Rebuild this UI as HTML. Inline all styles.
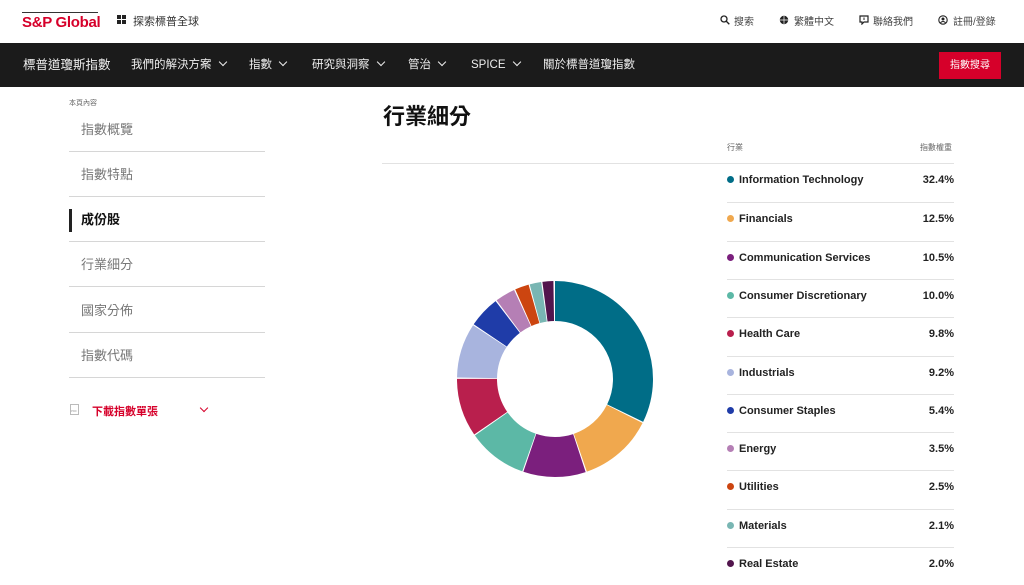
<!DOCTYPE html>
<html><head><meta charset="utf-8"><style>
*{margin:0;padding:0;box-sizing:border-box}
body{width:1024px;height:575px;overflow:hidden;background:#fff;font-family:"Liberation Sans","Noto Sans CJK TC",sans-serif;color:#222;position:relative}
.abs{position:absolute}
.top a{position:absolute;top:13px;font-size:10px;color:#444;white-space:nowrap}
.nav{position:absolute;top:43px;left:0;width:1024px;height:44px;background:#1b1b1b}
.nav span{position:absolute;top:0;height:44px;line-height:44px;color:#eee;font-size:11.5px;white-space:nowrap}
.chev{display:inline-block;width:6px;height:6px;border-right:1.6px solid #eee;border-bottom:1.6px solid #eee;transform:rotate(45deg);margin-left:8px;position:relative;top:-3px}
.side{position:absolute;left:69px;width:196px;height:45px;border-bottom:1px solid #d6d6d6;font-size:13px;color:#777;padding-left:12px;line-height:45px}
.row{position:absolute;left:727px;width:227px;height:38.3px;border-top:1px solid #e2e2e2;font-size:11px;font-weight:bold;color:#222}
.row .d{position:absolute;left:0;top:12px;width:7px;height:7px;border-radius:50%}
.row .n{position:absolute;left:12px;top:10px}
.row .v{position:absolute;right:0;top:10px}
</style></head><body>
<div class="abs" style="left:22px;top:12px;width:76px;border-top:1.5px solid #333"></div>
<div class="abs" style="left:22px;top:14px;font-size:15px;font-weight:bold;color:#d6002a;letter-spacing:-0.3px">S&amp;P Global</div>
<div class="abs" style="left:117px;top:15px;width:9px;height:9px">
<div class="abs" style="left:0;top:0;width:4px;height:4px;background:#222"></div><div class="abs" style="left:5px;top:0;width:4px;height:4px;background:#222"></div><div class="abs" style="left:0;top:5px;width:4px;height:4px;background:#222"></div><div class="abs" style="left:5px;top:5px;width:4px;height:4px;background:#222"></div></div>
<div class="abs" style="left:133px;top:13px;font-size:11px;color:#333">探索標普全球</div>
<div class="top">
<svg class="abs" style="left:720px;top:15px" width="10" height="10" viewBox="0 0 10 10"><circle cx="4" cy="4" r="3" fill="none" stroke="#222" stroke-width="1.3"/><line x1="6.3" y1="6.3" x2="9.3" y2="9.3" stroke="#222" stroke-width="1.4"/></svg>
<a style="left:734px">搜索</a>
<svg class="abs" style="left:779px;top:15px" width="10" height="10" viewBox="0 0 10 10"><circle cx="5" cy="5" r="4.2" fill="#222"/><path d="M1 5h8M5 1v8" stroke="#fff" stroke-width=".7"/></svg>
<a style="left:794px">繁體中文</a>
<svg class="abs" style="left:859px;top:15px" width="10" height="10" viewBox="0 0 10 10"><path d="M1 1h8v6H5L3 9V7H1z" fill="none" stroke="#222" stroke-width="1.2"/><path d="M5 2.5v2.5" stroke="#222" stroke-width="1"/></svg>
<a style="left:873px">聯絡我們</a>
<svg class="abs" style="left:938px;top:15px" width="10" height="10" viewBox="0 0 10 10"><circle cx="5" cy="5" r="4.2" fill="none" stroke="#222" stroke-width="1.1"/><circle cx="5" cy="4" r="1.5" fill="#222"/><path d="M2.5 8c1-2 4-2 5 0" stroke="#222" fill="none"/></svg>
<a style="left:953px">註冊/登錄</a>
</div>
<div class="nav">
<span style="left:23px;font-size:12.5px">標普道瓊斯指數</span>
<span style="left:131px">我們的解決方案<i class="chev"></i></span>
<span style="left:249px">指數<i class="chev"></i></span>
<span style="left:312px">研究與洞察<i class="chev"></i></span>
<span style="left:408px">管治<i class="chev"></i></span>
<span style="left:471px">SPICE<i class="chev"></i></span>
<span style="left:543px">關於標普道瓊指數</span>
<div class="abs" style="left:939px;top:9px;width:62px;height:27px;background:#d6002a;color:#fff;font-size:10px;text-align:center;line-height:27px">指數搜尋</div>
</div>
<div class="abs" style="left:69px;top:98px;font-size:7px;color:#666">本頁內容</div>
<div class="side" style="top:107px">指數概覽</div>
<div class="side" style="top:152px">指數特點</div>
<div class="side" style="top:197px;color:#111;font-weight:bold">成份股</div>
<div class="abs" style="left:69px;top:209px;width:3px;height:23px;background:#222"></div>
<div class="side" style="top:242px">行業細分</div>
<div class="side" style="top:288px">國家分佈</div>
<div class="side" style="top:333px">指數代碼</div>
<div class="abs" style="left:70px;top:404px;width:9px;height:11px;border:1px solid #bbb;font-size:3px;color:#999;padding-top:4px">PDF</div>
<div class="abs" style="left:92px;top:403px;font-size:11px;font-weight:bold;color:#d6002a">下載指數單張</div>
<div class="abs" style="left:201px;top:405px;width:6px;height:6px;border-right:1.5px solid #d6002a;border-bottom:1.5px solid #d6002a;transform:rotate(45deg)"></div>
<div class="abs" style="left:383px;top:99px;font-size:22px;font-weight:bold;color:#111">行業細分</div>
<div class="abs" style="left:382px;top:163px;width:572px;border-top:1px solid #e2e2e2"></div>
<div class="abs" style="left:727px;top:142px;font-size:8px;color:#666">行業</div>
<div class="abs" style="left:920px;top:142px;font-size:8px;color:#666">指數權重</div>
<svg class="abs" style="left:455px;top:279px" width="200" height="200" viewBox="0 0 200 200">
<g transform="rotate(-90 100 100)" fill="none" stroke-width="40">
<circle cx="100" cy="100" r="78" stroke="#006d87" stroke-dasharray="157.8 500" stroke-dashoffset="0"/>
<circle cx="100" cy="100" r="78" stroke="#f0a84e" stroke-dasharray="60.3 500" stroke-dashoffset="-158.8"/>
<circle cx="100" cy="100" r="78" stroke="#7b1f7d" stroke-dasharray="50.5 500" stroke-dashoffset="-220.1"/>
<circle cx="100" cy="100" r="78" stroke="#5cb8a6" stroke-dasharray="48 500" stroke-dashoffset="-271.5"/>
<circle cx="100" cy="100" r="78" stroke="#b91f4d" stroke-dasharray="47 500" stroke-dashoffset="-320.5"/>
<circle cx="100" cy="100" r="78" stroke="#a8b4de" stroke-dasharray="44.1 500" stroke-dashoffset="-368.6"/>
<circle cx="100" cy="100" r="78" stroke="#1f3ca8" stroke-dasharray="25.5 500" stroke-dashoffset="-413.6"/>
<circle cx="100" cy="100" r="78" stroke="#b57fb5" stroke-dasharray="16.2 500" stroke-dashoffset="-440.1"/>
<circle cx="100" cy="100" r="78" stroke="#cc4510" stroke-dasharray="11.3 500" stroke-dashoffset="-457.3"/>
<circle cx="100" cy="100" r="78" stroke="#79b6b3" stroke-dasharray="9.3 500" stroke-dashoffset="-469.5"/>
<circle cx="100" cy="100" r="78" stroke="#52154d" stroke-dasharray="8.8 500" stroke-dashoffset="-479.8"/>
</g></svg>
<div class="row" style="top:164px;border-top:none"><i class="d" style="background:#006d87"></i><span class="n">Information Technology</span><span class="v">32.4%</span></div>
<div class="row" style="top:202.3px"><i class="d" style="background:#f0a84e"></i><span class="n">Financials</span><span class="v">12.5%</span></div>
<div class="row" style="top:240.6px"><i class="d" style="background:#7b1f7d"></i><span class="n">Communication Services</span><span class="v">10.5%</span></div>
<div class="row" style="top:278.9px"><i class="d" style="background:#5cb8a6"></i><span class="n">Consumer Discretionary</span><span class="v">10.0%</span></div>
<div class="row" style="top:317.2px"><i class="d" style="background:#b91f4d"></i><span class="n">Health Care</span><span class="v">9.8%</span></div>
<div class="row" style="top:355.5px"><i class="d" style="background:#a8b4de"></i><span class="n">Industrials</span><span class="v">9.2%</span></div>
<div class="row" style="top:393.8px"><i class="d" style="background:#1f3ca8"></i><span class="n">Consumer Staples</span><span class="v">5.4%</span></div>
<div class="row" style="top:432.1px"><i class="d" style="background:#b57fb5"></i><span class="n">Energy</span><span class="v">3.5%</span></div>
<div class="row" style="top:470.4px"><i class="d" style="background:#cc4510"></i><span class="n">Utilities</span><span class="v">2.5%</span></div>
<div class="row" style="top:508.7px"><i class="d" style="background:#79b6b3"></i><span class="n">Materials</span><span class="v">2.1%</span></div>
<div class="row" style="top:547px"><i class="d" style="background:#52154d"></i><span class="n">Real Estate</span><span class="v">2.0%</span></div>
</body></html>
